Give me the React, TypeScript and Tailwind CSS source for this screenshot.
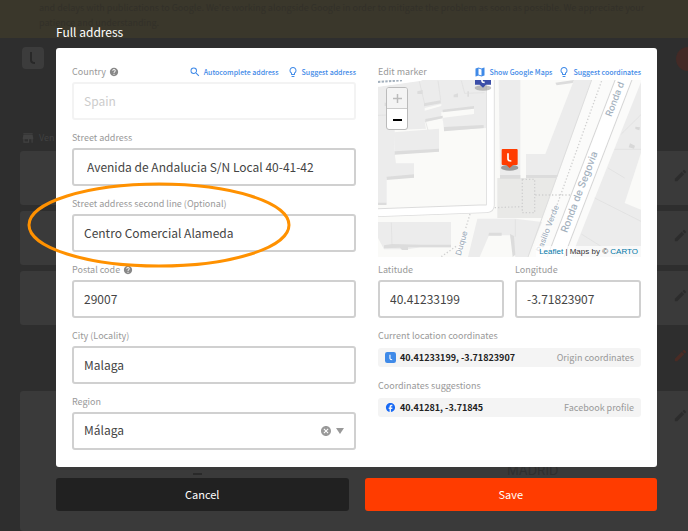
import { useState } from 'react';
import type { ReactNode } from 'react';
import { MdSearch, MdOutlineLightbulb, MdMap, MdStore, MdEdit, MdHelp, MdCancel, MdFacebook } from 'react-icons/md';
import { clsx } from 'clsx';

interface FieldProps {
  id: string;
  label: string;
  value: string;
  help?: boolean;
  disabled?: boolean;
  indent?: boolean;
  actions?: ReactNode;
}

const inputClass =
  'block h-[38px] w-full rounded-[3px] border-2 bg-white px-[10px] pb-[2px] text-[12px] outline-none';

function Field({ id, label, value, help, disabled, indent, actions }: FieldProps) {
  const [text, setText] = useState(value);

  return (
    <div>
      <div className="flex h-[18px] items-start justify-between leading-4">
        <label htmlFor={id} className="flex items-center gap-[3px] text-[9px] text-[#999]">
          {label}
          {help && <MdHelp className="size-[10px] text-[#888]" />}
        </label>
        {actions}
      </div>
      <input
        id={id}
        value={text}
        disabled={disabled}
        onChange={(e) => setText(e.target.value)}
        className={clsx(
          inputClass,
          disabled ? 'border-[#f3f3f3] text-[#ccc]' : 'border-[#d0d0d0] text-[#444]',
          indent && 'pl-[13px]'
        )}
      />
    </div>
  );
}

function ActionButton({ icon, children }: { icon: ReactNode; children: ReactNode }) {
  return (
    <button type="button" className="flex h-4 items-center gap-[3px] text-[7px] font-medium whitespace-nowrap text-[#3f8ae8]">
      {icon}
      {children}
    </button>
  );
}

function CoordinatesRow({ icon, coords, source }: { icon: ReactNode; coords: string; source: string }) {
  return (
    <div className="flex h-[19px] items-center rounded-[3px] bg-[#f4f4f4] px-[7px] text-[9px]">
      {icon}
      <span className="ml-1 font-bold text-[#222]">{coords}</span>
      <span className="ml-auto text-[#999]">{source}</span>
    </div>
  );
}

function LocationMap() {
  return (
    <div className="relative h-[177px] overflow-hidden bg-[#fafaf8]">
      <svg viewBox="0 6 789 531" preserveAspectRatio="xMidYMid slice" className="size-full" aria-hidden="true">
        {/* Blocks, with a darker strip for the building sides */}
        <g fill="#ececec">
          <path d="M0 26 135 6H326V150L198 158 195 128 140 132 144 152 50 156V250L0 256Z" />
          <path d="M47 163 183 152V221L52 227Z" />
          <path d="M0 198H46L54 256H108V300H26V380H0Z" />
          <path d="M362 6H427V300H366Z" />
          <path d="M444 228H502L588 6H642L536 300H444Z" />
          <path d="M0 432H219V508H128L90 514H18L0 480Z" />
          <path d="M298 422H412L492 432 450 537H412L396 472H333L305 537H270Z" />
        </g>
        <path d="M358 300H536L492 420H358Z" fill="#e9e9e7" />
        <g fill="#fafaf8">
          <path d="M190 102 288 88V108L190 120Z" />
          <path d="M140 90 190 78V84L140 98ZM144 133 194 120V130L146 141Z" />
        </g>
        <g fill="#dcdcdc">
          <path d="M138 76 188 67V76L138 85ZM142 123 194 113V121L142 131ZM194 95 288 84V92L194 103ZM198 147 317 141V150L198 160Z" />
          <path d="M50 220 183 212V221L50 230ZM26 296 108 289V299L26 306ZM0 374H25V381H0Z" />
          <path d="M366 291H427V302H366ZM444 291H540L536 300H444Z" />
          <path d="M18 502 42 498 128 500H219V508H128V508H90V516H72L66 509 18 511Z" />
          <path d="M333 464H371V473H331ZM396 468 408 474 412 530 404 537Z" />
          <path d="M532 14 588 6 584 15 536 22ZM227 50 240 46V58H227ZM118 40 134 36V48H118ZM20 74H26V84H20ZM268 40H273V56H268Z" />
        </g>
        <path
          d="M124 10 140 78M250 8 260 46 320 44M188 66 180 8M0 112 50 110M150 156 142 128M40 434 42 500M412 424V476"
          fill="none"
          stroke="#dedede"
          strokeWidth="2"
        />
        {/* Streets */}
        <path d="M0 20 130 2" stroke="#fff" strokeWidth="12" />
        <path d="M0 404 326 392Q337 391 337 382V0" fill="none" stroke="#dcdcdc" strokeWidth="26" />
        <path d="M0 404 326 392Q337 391 337 382V0" fill="none" stroke="#fff" strokeWidth="21" />
        <path d="M642 0H800L580 560H450Z" fill="#fbfbfa" />
        <path d="M748 -24 524 560" stroke="#d6d6d6" strokeWidth="50" />
        <path d="M748 -24 524 560" stroke="#fff" strokeWidth="44" />
        <path d="M643 0 450 537" stroke="#dedede" strokeWidth="3" />
        <path d="M789 12V537H580Z" fill="#ececec" />
        <path d="M789 225 740 375 789 395Z" fill="#fafaf8" />
        <path
          d="M730 168 789 110M710 214H789M650 360 789 430M610 468 720 537M690 270 740 300"
          fill="none"
          stroke="#dedede"
          strokeWidth="2"
        />
        <path d="M756 196 771 203 768 212 752 208ZM772 146 786 148 784 157 772 153Z" fill="#d8d8d8" />
        <path
          d="M674 0 536 384M350 389 432 386M433 304H470V404H433ZM472 351H578M276 408 262 455M234 505 190 536"
          fill="none"
          stroke="#d0d0d0"
          strokeWidth="4"
          strokeDasharray="4 6"
        />
        <g fontFamily="Inter, sans-serif" fontWeight="500" fill="#a3b0bd" stroke="#fff" strokeWidth="4" paintOrder="stroke">
          <text transform="translate(700 118) rotate(-69)" fontSize="28">Ronda d</text>
          <text transform="translate(567 466) rotate(-69)" fontSize="30">Ronda de Segovia</text>
          <text transform="translate(490 524) rotate(-69)" fontSize="24">Pasillo Verde</text>
          <text transform="translate(248 534) rotate(-74)" fontSize="24">Duque</text>
        </g>
        <path d="M0 12 72 7" stroke="#a3b0bd" strokeWidth="6" strokeDasharray="7 4" />
        {/* Markers */}
        <ellipse cx="315" cy="30" rx="25" ry="8" fill="#999" opacity="0.6" />
        <path d="M291 -24H339V20H324L315 29 305 20H291Z" fill="#3b4ea8" />
        <path d="M312 0V8Q312 13 320 13" fill="none" stroke="#fff" strokeWidth="5" />
        <ellipse cx="395" cy="269" rx="26" ry="9" fill="#777" opacity="0.7" />
        <path d="M374 213H416Q419 213 419 216V258Q419 261 416 261H405L395 270 385 261H374Q371 261 371 258V216Q371 213 374 213Z" fill="#ff3c00" />
        <path d="M390 226V242Q390 249 400 249" fill="none" stroke="#fff" strokeWidth="5" />
      </svg>
      <div className="absolute top-[7px] left-2 flex w-[22px] flex-col rounded-[3px] border border-[#bbb] bg-white">
        <button type="button" aria-label="Zoom in" className="flex h-[21px] items-center justify-center rounded-t-[2px] border-b border-[#ccc] bg-[#f4f4f4]">
          <svg viewBox="0 0 9 9" className="size-[9px]" stroke="#bbb" strokeWidth="1.5"><path d="M0 4.5H9M4.5 0V9" /></svg>
        </button>
        <button type="button" aria-label="Zoom out" className="flex h-5 items-center justify-center">
          <svg viewBox="0 0 9 9" className="size-[9px]" stroke="#000" strokeWidth="2"><path d="M0 5H9" /></svg>
        </button>
      </div>
      <div className="absolute right-0 bottom-0 bg-white/70 px-[3px] font-['Liberation_Sans'] text-[8px] leading-[11px] text-[#333]">
        <a href="#leaflet" className="text-[#0078a8]">Leaflet</a> | Maps by © <a href="#carto" className="text-[#0078a8]">CARTO</a>
      </div>
    </div>
  );
}

function RegionSelect() {
  return (
    <div>
      <label htmlFor="region" className="block h-[18px] text-[9px] leading-4 text-[#999]">Region</label>
      <div className="relative">
        <select id="region" defaultValue="Málaga" className={clsx(inputClass, 'appearance-none border-[#d0d0d0] text-[#444]')}>
          <option>Málaga</option>
          <option>Madrid</option>
        </select>
        <div className="absolute inset-y-0 right-3 flex items-center gap-1 text-[#999]">
          <button type="button" aria-label="Clear region"><MdCancel className="size-3" /></button>
          <svg viewBox="0 0 8 6" className="h-[6px] w-2" fill="currentColor"><path d="M0 0H8L4 6Z" /></svg>
        </div>
      </div>
    </div>
  );
}

function PageCard({ className }: { className?: string }) {
  return (
    <div className={clsx('flex justify-end rounded-l-[3px] bg-[#3a3a3a]', className)}>
      <MdEdit className="mt-[17px] size-[15px] text-[#2c2c2c]" />
    </div>
  );
}

function PageBehind() {
  return (
    <div className="flex min-h-screen flex-col overflow-hidden bg-[#2e2e2e]" aria-hidden="true">
      <div className="h-[38px] bg-[#3a372b] pr-4 pl-[39px] text-[9px] leading-[15px] text-[#323029]">
        and delays with publications to Google. We're working alongside Google in order to mitigate the problem as soon as possible. We appreciate your patience and understanding.
      </div>
      <div className="flex h-[86px] items-start justify-between pt-[9px] pl-[22px]">
        <div className="flex size-[22px] items-center justify-center rounded bg-[#3c3c3c]">
          <svg viewBox="0 0 8 12" className="h-3 w-2" fill="none" stroke="#282828" strokeWidth="2"><path d="M2 0V8Q2 11 6 11" /></svg>
        </div>
        <div className="-mr-3 size-6 rounded-full bg-[#432a26]" />
      </div>
      <div className="flex h-[27px] items-center gap-1 pl-[21px] text-[9px] text-[#414141]">
        <MdStore className="size-[14px]" />
        Ven
      </div>
      <div className="flex grow flex-col gap-[6px] pl-5">
        <PageCard className="h-[54px]" />
        <PageCard className="h-[54px]" />
        <PageCard className="h-[54px]" />
        <div className="flex h-[54px] justify-end">
          <MdEdit className="mt-[17px] size-[15px] text-[#4a2b24]" />
        </div>
        <div className="relative grow rounded-l-[3px] bg-[#3a3a3a]">
          <MdEdit className="mt-[17px] ml-auto size-[15px] text-[#2c2c2c]" />
          <span className="absolute top-[70px] left-[487px] font-['Inter'] text-[13px] text-[#2f2f2f]">MADRID</span>
          <span className="absolute top-[82px] left-[173px] h-[2px] w-[9px] bg-[#292929]" />
        </div>
      </div>
    </div>
  );
}

export default function App() {
  return (
    <div className="relative font-['Noto_Sans_CJK_SC',sans-serif]">
      <PageBehind />

      <form className="absolute inset-x-0 top-0 pt-[22px] pr-[31px] pl-14" onSubmit={(e) => e.preventDefault()}>
        <h1 className="h-[26px] text-[12px] leading-5 text-white">Full address</h1>

        <div className="grid grid-cols-[284fr_263fr] gap-x-[22px] rounded-[3px] bg-white px-4 pt-4 pb-[17px]">
          <div className="flex flex-col gap-[10px]">
            <Field
              id="country"
              label="Country"
              value="Spain"
              help
              disabled
              actions={
                <div className="flex gap-2">
                  <ActionButton icon={<MdSearch className="size-3" />}>Autocomplete address</ActionButton>
                  <ActionButton icon={<MdOutlineLightbulb className="size-3" />}>Suggest address</ActionButton>
                </div>
              }
            />
            <Field id="street" label="Street address" value="Avenida de Andalucia S/N Local 40-41-42" indent />
            <div className="relative">
              <Field id="street2" label="Street address second line (Optional)" value="Centro Comercial Alameda" />
              {/* Highlight around the second line */}
              <svg viewBox="0 0 264 86" className="pointer-events-none absolute -top-[14px] -left-[45px] h-[86px] w-[264px]" fill="none">
                <ellipse cx="132" cy="43" rx="130" ry="41" stroke="#ff9100" strokeWidth="3" />
              </svg>
            </div>
            <Field id="postal" label="Postal code" value="29007" help />
            <Field id="city" label="City (Locality)" value="Malaga" />
            <RegionSelect />
          </div>

          <div>
            <div className="flex h-4 items-center justify-between">
              <span className="text-[9px] leading-4 text-[#999]">Edit marker</span>
              <div className="flex gap-[6px]">
                <ActionButton icon={<MdMap className="size-3" />}>Show Google Maps</ActionButton>
                <ActionButton icon={<MdOutlineLightbulb className="size-3" />}>Suggest coordinates</ActionButton>
              </div>
            </div>
            <LocationMap />
            <div className="mt-[5px] grid grid-cols-2 gap-[11px]">
              <Field id="latitude" label="Latitude" value="40.41233199" />
              <Field id="longitude" label="Longitude" value="-3.71823907" />
            </div>
            <h2 className="mt-[10px] h-5 text-[9px] leading-4 text-[#999]">Current location coordinates</h2>
            <CoordinatesRow
              icon={
                <svg viewBox="0 0 10 10" className="size-[11px]">
                  <rect width="10" height="10" rx="2" fill="#3f8ae8" />
                  <path d="M4.5 2.5V6Q4.5 7 6.5 7" fill="none" stroke="#fff" />
                </svg>
              }
              coords="40.41233199, -3.71823907"
              source="Origin coordinates"
            />
            <h2 className="mt-[11px] h-5 text-[9px] leading-4 text-[#999]">Coordinates suggestions</h2>
            <CoordinatesRow
              icon={<MdFacebook className="size-[11px] text-[#1769f5]" />}
              coords="40.41281, -3.71845"
              source="Facebook profile"
            />
          </div>
        </div>

        <div className="mt-[11px] grid grid-cols-2 gap-4 text-[11px] text-white">
          <button type="button" className="h-[33px] rounded-[3px] bg-[#212121]">Cancel</button>
          <button type="submit" className="h-[33px] rounded-[3px] bg-[#ff3c00]">Save</button>
        </div>
      </form>
    </div>
  );
}
